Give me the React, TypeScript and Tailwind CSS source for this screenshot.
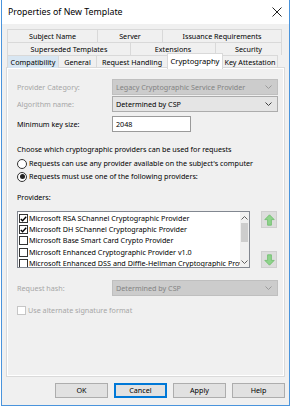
import React from "react";

const tabRows = [
  [
    { label: "Subject Name", w: "w-[90px]" },
    { label: "Server", w: "w-[65px]" },
    { label: "Issuance Requirements", w: "w-[120px]" },
  ],
  [
    { label: "Superseded Templates", w: "w-[123px]" },
    { label: "Extensions", w: "w-[85px]" },
    { label: "Security", w: "w-[67px]" },
  ],
];

const providers = [
  { label: "Microsoft RSA SChannel Cryptographic Provider", checked: true },
  { label: "Microsoft DH SChannel Cryptographic Provider", checked: true },
  { label: "Microsoft Base Smart Card Crypto Provider", checked: false },
  { label: "Microsoft Enhanced Cryptographic Provider v1.0", checked: false },
  { label: "Microsoft Enhanced DSS and Diffie-Hellman Cryptographic Provider", checked: false },
];

function Chevron({ up = false, color = "#606060" }: { up?: boolean; color?: string }) {
  return (
    <svg width="7" height="4" viewBox="0 0 7 4" className="shrink-0">
      <polyline
        points={up ? "0.5,3.5 3.5,0.5 6.5,3.5" : "0.5,0.5 3.5,3.5 6.5,0.5"}
        fill="none"
        stroke={color}
        strokeWidth="1"
      />
    </svg>
  );
}

function Select({ value, disabled }: { value: string; disabled?: boolean }) {
  return (
    <div
      className={`flex h-[16px] flex-1 items-center justify-between border pl-[3px] pr-[5px] leading-[12px] ${
        disabled ? "border-[#bfbfbf] bg-[#cccccc] text-[#838383]" : "border-[#acacac] bg-[#e5e5e5] text-black"
      }`}
    >
      <span className="whitespace-nowrap">{value}</span>
      <Chevron color={disabled ? "#9a9a9a" : "#404040"} />
    </div>
  );
}

function Check({ checked, disabled }: { checked?: boolean; disabled?: boolean }) {
  return (
    <span
      className={`flex h-[9px] w-[9px] shrink-0 items-center justify-center border bg-white ${
        disabled ? "border-[#c6c6c6]" : "border-[#333333]"
      }`}
    >
      {checked && (
        <svg width="7" height="6" viewBox="0 0 7 6">
          <polyline points="0.8,3 2.6,4.8 6.2,0.8" fill="none" stroke="#000" strokeWidth="1.4" />
        </svg>
      )}
    </span>
  );
}

function Radio({ checked }: { checked?: boolean }) {
  return (
    <span className="flex h-[10px] w-[10px] shrink-0 items-center justify-center rounded-full border border-[#333333] bg-white">
      {checked && <span className="h-[5px] w-[5px] rounded-full bg-[#222222]" />}
    </span>
  );
}

function ArrowButton({ down = false }: { down?: boolean }) {
  return (
    <div className="flex h-[17px] w-[16px] items-center justify-center border border-[#cfcfcf] bg-[#dddddd]">
      <svg width="11" height="12" viewBox="0 0 11 12" className={down ? "rotate-180" : ""}>
        <polygon points="5.5,0.8 10.2,5.6 7.4,5.6 7.4,11.2 3.6,11.2 3.6,5.6 0.8,5.6" fill="#8fd48c" stroke="#6cbd69" strokeWidth="0.8" />
      </svg>
    </div>
  );
}

function Button({ label, focused }: { label: string; focused?: boolean }) {
  return (
    <div
      className={`flex h-[15px] w-[53px] items-center justify-center bg-[#e1e1e1] ${
        focused ? "border border-[#0078d7] shadow-[inset_0_0_0_1px_#0078d7]" : "border border-[#adadad]"
      }`}
    >
      {label}
    </div>
  );
}

export default function App() {
  return (
    <div className="h-[408px] w-[292px] overflow-hidden bg-white font-['Noto_Sans',sans-serif] text-[7.2px] leading-[11px] text-black">
      <div className="ml-[1px] flex h-[406px] w-[289px] flex-col border-x border-b border-[#4a94dc] bg-[#f0f0f0]">
        <div className="flex h-[24px] shrink-0 items-center justify-between bg-white pl-[6px] pr-[7px]">
          <span className="text-[8.8px] text-black">Properties of New Template</span>
          <svg width="10" height="10" viewBox="0 0 10 10">
            <path d="M0.5 0.5 L9.5 9.5 M9.5 0.5 L0.5 9.5" stroke="#222" strokeWidth="1" />
          </svg>
        </div>

        <div className="pl-[5px] pr-[5px] pt-[5px]">
          {tabRows.map((row, i) => (
            <div key={i} className="flex h-[13px]">
              {row.map((t, j) => (
                <div
                  key={t.label}
                  className={`${t.w} flex items-center justify-center border-l border-t border-[#d9d9d9] bg-[#f0f0f0] ${
                    j === row.length - 1 ? "border-r" : ""
                  }`}
                >
                  {t.label}
                </div>
              ))}
            </div>
          ))}
          <div className="flex h-[13px]">
            <div className="flex w-[51px] items-center justify-center border-l border-t border-[#d9d9d9] bg-[#d8e6f2]">Compatibility</div>
            <div className="flex w-[38px] items-center justify-center border-l border-t border-[#d9d9d9]">General</div>
            <div className="flex w-[71px] items-center justify-center border-l border-t border-[#d9d9d9]">Request Handling</div>
            <div className="relative z-10 -mt-[2px] flex h-[16px] w-[56px] items-center justify-center border-x border-t border-[#d9d9d9] bg-white pb-[1px] text-[7.6px]">
              Cryptography
            </div>
            <div className="flex w-[55px] items-center justify-center border-r border-t border-[#d9d9d9]">Key Attestation</div>
          </div>

          <div className="flex h-[308px] flex-col border border-white pl-[9px] pr-[5px] pt-[10px] shadow-[0_0_0_1px_#dadada]">
            <div className="flex h-[16px] items-center">
              <span className="w-[95px] text-[#a6a6a6]">Provider Category:</span>
              <Select value="Legacy Cryptographic Service Provider" disabled />
            </div>
            <div className="mt-[1px] flex h-[16px] items-center">
              <span className="w-[95px] text-[#a6a6a6]">Algorithm name:</span>
              <Select value="Determined by CSP" />
            </div>
            <div className="mt-[4px] flex h-[16px] items-center">
              <span className="w-[95px]">Minimum key size:</span>
              <div className="flex h-[16px] w-[79px] items-center border border-[#9a9a9a] bg-white pl-[3px]">2048</div>
            </div>

            <div className="mt-[11px] flex h-[12px] items-center">Choose which cryptographic providers can be used for requests</div>
            <div className="mt-[2px] flex h-[13px] items-center gap-[2px]">
              <Radio />
              <span>Requests can use any provider available on the subject's computer</span>
            </div>
            <div className="flex h-[13px] items-center gap-[2px]">
              <Radio checked />
              <span>Requests must use one of the following providers:</span>
            </div>

            <div className="mt-[8px] flex h-[12px] items-center">Providers:</div>
            <div className="mt-[8px] flex">
              <div className="flex h-[57px] w-[233px] border border-[#828790] bg-white">
                <div className="flex min-w-0 flex-1 flex-col overflow-hidden pt-[1px]">
                  {providers.map((p) => (
                    <div key={p.label} className="flex h-[11.2px] shrink-0 items-center gap-[1px] whitespace-nowrap pl-[1px]">
                      <Check checked={p.checked} />
                      <span>{p.label}</span>
                    </div>
                  ))}
                </div>
                <div className="flex w-[9px] shrink-0 flex-col items-center bg-[#f0f0f0]">
                  <div className="flex h-[11px] items-center">
                    <Chevron up />
                  </div>
                  <div className="h-[19px] w-[7px] bg-[#cdcdcd]" />
                  <div className="flex-1" />
                  <div className="flex h-[11px] items-center">
                    <Chevron />
                  </div>
                </div>
              </div>
              <div className="ml-[11px] flex h-[57px] flex-col justify-between">
                <ArrowButton />
                <ArrowButton down />
              </div>
            </div>

            <div className="mt-[12px] flex h-[16px] items-center">
              <span className="w-[95px] text-[#a6a6a6]">Request hash:</span>
              <Select value="Determined by CSP" disabled />
            </div>
            <div className="mt-[8px] flex h-[12px] items-center gap-[2px] text-[#a6a6a6]">
              <Check disabled />
              <span>Use alternate signature format</span>
            </div>
          </div>
        </div>

        <div className="mt-[7px] flex justify-end gap-[6px] pr-[4px]">
          <Button label="OK" />
          <Button label="Cancel" focused />
          <Button label="Apply" />
          <Button label="Help" />
        </div>
      </div>
    </div>
  );
}
